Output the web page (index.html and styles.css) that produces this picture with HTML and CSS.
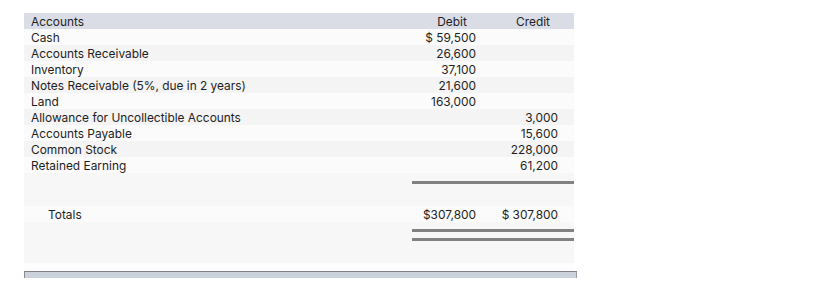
FILE: index.html
```html
<!DOCTYPE html>
<html>
<head>
<meta charset="utf-8">
<link rel="stylesheet" href="styles.css">
</head>
<body>
<div class="sheet">
  <div class="row head">
    <div class="acct">Accounts</div>
    <div class="num center">Debit</div>
    <div class="num center">Credit</div>
  </div>
  <div class="row light"><div class="acct">Cash</div><div class="num">$ 59,500</div><div class="num"></div></div>
  <div class="row grey"><div class="acct">Accounts Receivable</div><div class="num">26,600</div><div class="num"></div></div>
  <div class="row light"><div class="acct">Inventory</div><div class="num">37,100</div><div class="num"></div></div>
  <div class="row grey"><div class="acct">Notes Receivable (5%, due in 2 years)</div><div class="num">21,600</div><div class="num"></div></div>
  <div class="row light"><div class="acct">Land</div><div class="num">163,000</div><div class="num"></div></div>
  <div class="row grey"><div class="acct">Allowance for Uncollectible Accounts</div><div class="num"></div><div class="num">3,000</div></div>
  <div class="row light"><div class="acct">Accounts Payable</div><div class="num"></div><div class="num">15,600</div></div>
  <div class="row grey"><div class="acct">Common Stock</div><div class="num"></div><div class="num">228,000</div></div>
  <div class="row light"><div class="acct">Retained Earning</div><div class="num"></div><div class="num">61,200</div></div>
  <div class="rule-row single">
    <div></div>
    <div class="rules"><span class="bar"></span></div>
  </div>
  <div class="row light totals"><div class="acct">Totals</div><div class="num">$307,800</div><div class="num">$ 307,800</div></div>
  <div class="rule-row double">
    <div></div>
    <div class="rules"><span class="bar"></span><span class="bar"></span></div>
  </div>
  <div class="gap"></div>
  <div class="footer"></div>
</div>
</body>
</html>
```
FILE: styles.css
```css
html, body {
  margin: 0;
  padding: 0;
  background: #ffffff;
}
body {
  padding: 13px 0 0 24px;
  font-family: Inter, "Open Sans", sans-serif;
  font-size: 11.9px;
  color: #1e1e24;
}
.sheet {
  width: 550px;
  display: flex;
  flex-direction: column;
}
.row {
  display: grid;
  grid-template-columns: 388px 80px 82px;
  height: 16px;
  line-height: 15px;
  padding-top: 1px;
  box-sizing: border-box;
}
.head {
  background: #dadde6;
}
.light {
  background: #fbfbfb;
}
.grey {
  background: #f4f4f4;
}
.acct {
  padding-left: 7px;
  white-space: nowrap;
}
.num {
  text-align: right;
  padding-right: 16px;
  white-space: nowrap;
}
.num.center {
  text-align: center;
  padding-right: 0;
}
.totals .acct {
  padding-left: 24px;
}
.totals .num:nth-child(2) {
  padding-right: 16px;
}
.rule-row {
  display: grid;
  grid-template-columns: 388px 162px;
  background: #f7f7f7;
}
.rule-row.single {
  height: 33px;
  padding-top: 8px;
  box-sizing: border-box;
}
.rule-row.double {
  height: 41px;
  padding-top: 7px;
  box-sizing: border-box;
}
.rules {
  display: flex;
  flex-direction: column;
  gap: 6px;
}
.bar {
  display: block;
  height: 3px;
  background: #818181;
}
.gap {
  height: 8px;
  background: #fdfdfd;
}
.footer {
  height: 6px;
  width: 551px;
  background: #ccd1de;
  border-top: 1px solid #7f8088;
  border-left: 1px solid #8a8c94;
  border-right: 1px solid #9a9ca4;
}
```
